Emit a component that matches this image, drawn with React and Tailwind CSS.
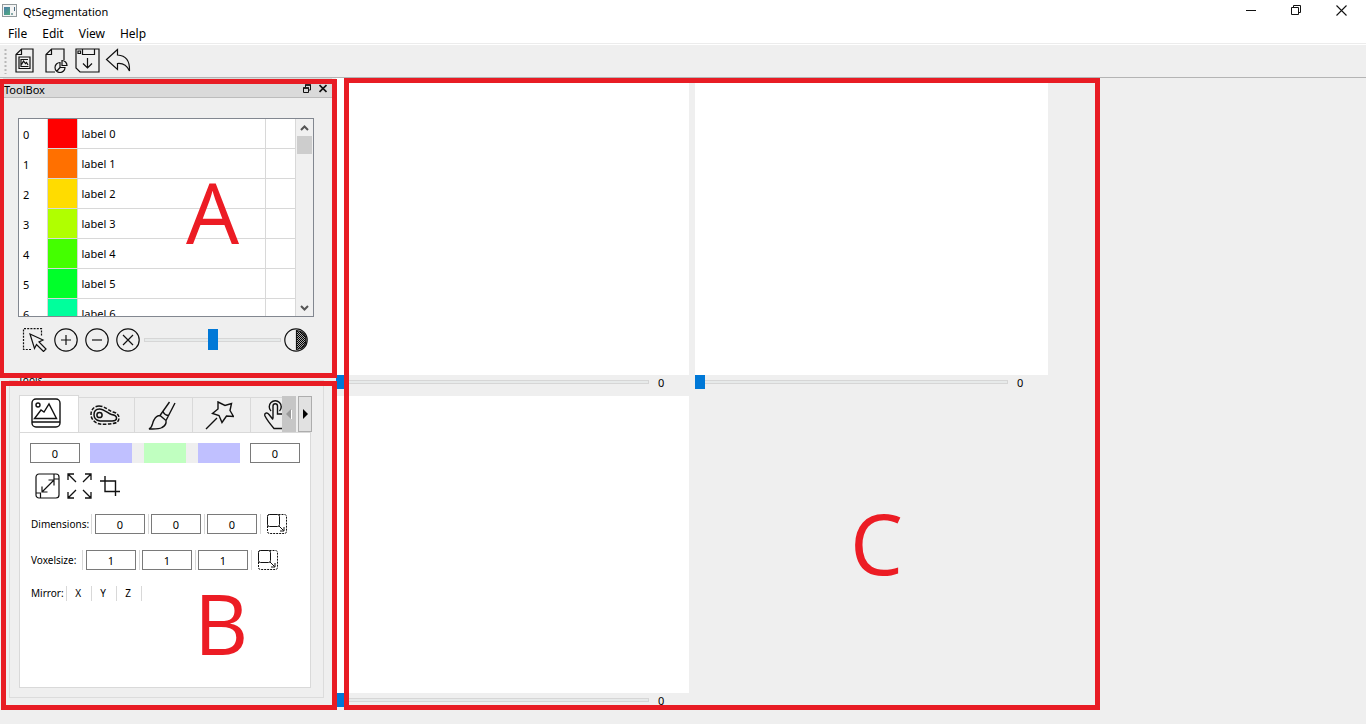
import React from "react";

const labels = [
  { name: "label 0", swatch: "bg-[#ff0000]" },
  { name: "label 1", swatch: "bg-[#ff7000]" },
  { name: "label 2", swatch: "bg-[#ffdc00]" },
  { name: "label 3", swatch: "bg-[#b0ff00]" },
  { name: "label 4", swatch: "bg-[#44ff00]" },
  { name: "label 5", swatch: "bg-[#00ff2a]" },
  { name: "label 6", swatch: "bg-[#00ff9c]" },
];

function Icon({ w, h, children, sw = 1.2 }) {
  return (
    <svg
      width={w}
      height={h}
      viewBox={`0 0 ${w} ${h}`}
      fill="none"
      stroke="#111"
      strokeWidth={sw}
      aria-hidden="true"
      className="block shrink-0"
    >
      {children}
    </svg>
  );
}

function IconButton({ label, children, className = "" }) {
  return (
    <button type="button" aria-label={label} className={`block shrink-0 ${className}`}>
      {children}
    </button>
  );
}

function TitleBar() {
  return (
    <header className="flex h-6 items-center justify-between bg-white pl-[2px] pr-[19px]">
      <div className="flex items-center gap-[6px]">
        <svg width="15" height="13" viewBox="0 0 15 13" aria-hidden="true" className="mb-[3px]">
          <defs>
            <linearGradient id="app" x1="0" y1="0" x2="0.6" y2="1">
              <stop offset="0" stopColor="#4a7ca8" />
              <stop offset="1" stopColor="#4fa585" />
            </linearGradient>
          </defs>
          <rect x="0.5" y="0.5" width="14" height="12" fill="#f4f4f4" stroke="#929a9c" />
          <rect x="2" y="3" width="6" height="8" fill="url(#app)" />
          <rect x="9" y="9" width="2" height="2" fill="#8aa" />
          <rect x="12" y="3" width="1" height="4" fill="#4b6a80" />
        </svg>
        <h1 className="text-[11px]">QtSegmentation</h1>
      </div>
      <div className="flex items-center gap-[35px] pb-1">
        <IconButton label="Minimize">
          <Icon w={10} h={11} sw={1}><path d="M0 5.5h10" /></Icon>
        </IconButton>
        <IconButton label="Restore">
          <Icon w={10} h={10} sw={1}><path d="M.5 2.5h7v7h-7zM2.5 2.5v-2h7v7h-2" /></Icon>
        </IconButton>
        <IconButton label="Close">
          <Icon w={11} h={11} sw={1.1}><path d="M.5.5l10 10M10.500.5l-10 10" /></Icon>
        </IconButton>
      </div>
    </header>
  );
}

function Toolbar() {
  return (
    <div role="toolbar" className="flex h-[33px] items-center gap-2 border-b border-[#b4b4b4] pb-px pl-1">
      <Icon w={3} h={26}><path d="M1.500 1v25" stroke="#b8b8b8" strokeWidth="2" strokeDasharray="2 2" /></Icon>
      <div className="flex gap-[6px]">
        <IconButton label="Open image" className="w-6">
          <Icon w={19} h={25}>
            <path d="M6.500 1H18v23H1V6.500zM6.500 1v5.500H1" />
            <path d="M4 9h11v11.500H4z" />
            <path d="M6 11.500h7M6 18.500h7.500M6 11v8M6.500 16.500l2-3.500 2 2.500 1-1 1.500 2.500" />
          </Icon>
        </IconButton>
        <IconButton label="Open segmentation" className="w-6">
          <Icon w={23} h={25}>
            <path d="M10 24H1V6.500L6.500 1H19v11M6.500 1v5.500H1" />
            <path d="M15 14.500a5 5 0 1 0 5 5h-5zM17 12.500v5h5a5 5 0 0 0-5-5zM15 19.500l-3 3.500" />
          </Icon>
        </IconButton>
        <IconButton label="Save" className="w-6">
          <Icon w={25} h={25}>
            <path d="M1 1h23v23H5l-4-4zM7.500 1v5.500h12V1M3 3h2.500v2.500H3zM12.500 10v10M8 15.500l4.500 4.500 4.500-4.500" />
          </Icon>
        </IconButton>
        <IconButton label="Undo" className="w-6">
          <Icon w={26} h={25}>
            <path d="M12.500 1.500L1.500 11.500l11 10v-6c5-.5 9.500 2 12 7.500C25 13 21 7.500 12.500 7z" />
          </Icon>
        </IconButton>
      </div>
    </div>
  );
}

function Annotation({ letter, className, letterClass }) {
  return (
    <div className={`pointer-events-none absolute z-10 border-5 border-[#e81c24] ${className}`}>
      <span className={`absolute text-[84px] font-medium leading-none text-[#ec1c24] font-['Open_Sans',sans-serif] ${letterClass}`}>
        {letter}
      </span>
    </div>
  );
}

function LabelTable() {
  return (
    <div className="ml-[18px] mr-[22px] flex h-[199px] border border-[#828790] bg-white">
      <div className="min-w-0 flex-1 overflow-hidden">
        <table className="-mt-px w-full table-fixed border-collapse text-left text-[11px]">
          <colgroup>
            <col className="w-[28px]" />
            <col className="w-[30px]" />
            <col />
            <col className="w-[30px]" />
          </colgroup>
          <tbody>
            {labels.map((l, i) => (
              <tr key={l.name} className="h-[30px]">
                <th scope="row" className="pl-1 pt-1 font-normal">{i}</th>
                <td className={`border border-[#d8d8d8] ${l.swatch}`}></td>
                <td className="border border-[#d8d8d8] pl-1 pt-px">{l.name}</td>
                <td className="border border-[#d8d8d8]"></td>
              </tr>
            ))}
          </tbody>
        </table>
      </div>
      <div className="flex w-[17px] flex-col items-center bg-[#f0f0f0] pr-px">
        <button type="button" aria-label="Scroll up" className="flex h-[17px] w-full items-center justify-center">
          <Icon w={9} h={6} sw={2}><path d="M1 5l3.500-3.500L8 5" stroke="#555" /></Icon>
        </button>
        <div className="h-[18px] w-[15px] bg-[#cdcdcd]"></div>
        <button type="button" aria-label="Scroll down" className="mt-auto flex h-[17px] w-full items-center justify-center">
          <Icon w={9} h={6} sw={2}><path d="M1 1l3.500 3.500L8 1" stroke="#555" /></Icon>
        </button>
      </div>
    </div>
  );
}

function ToolBox() {
  return (
    <section className="relative h-[295px]">
      <div className="ml-[3px] mr-1 flex h-5 items-end justify-between border-b border-[#bcbcbc] bg-[#dadada] pl-px pr-[5px]">
        <h2 className="text-[11px] leading-[15px]">ToolBox</h2>
        <div className="flex gap-2 pb-1">
          <IconButton label="Float">
            <Icon w={8} h={9} sw={1}><path d="M.5 4h5v4.500h-5zM2.500 3.500V1h5v5h-2" /><path d="M0 4h6M2 1h6" strokeWidth="1.500" /></Icon>
          </IconButton>
          <IconButton label="Close toolbox">
            <Icon w={8} h={9} sw={1.7}><path d="M.5 1l7 7M7.500 1l-7 7" /></Icon>
          </IconButton>
        </div>
      </div>
      <div className="h-5"></div>
      <LabelTable />
      <div className="flex h-[46px] items-center gap-[7px] pl-[22px]">
        <IconButton label="Select">
          <Icon w={25} h={24}>
            <path d="M9 21.500H1.500V.7h18V8" strokeDasharray="2 1.200" />
            <path d="M8 6l13 6-4 2 7 7-2.500 2.500-7-7-2 4z" />
          </Icon>
        </IconButton>
        <IconButton label="Add label">
          <Icon w={24} h={24}><circle cx="12" cy="12" r="11.200" /><path d="M12 7v10M7 12h10" /></Icon>
        </IconButton>
        <IconButton label="Remove label">
          <Icon w={24} h={24}><circle cx="12" cy="12" r="11.200" /><path d="M7 12h10" /></Icon>
        </IconButton>
        <IconButton label="Clear labels">
          <Icon w={24} h={24}><circle cx="12" cy="12" r="11.200" /><path d="M7 7l10 10M17 7L7 17" /></Icon>
        </IconButton>
        <div className="flex items-center gap-[3px]">
          <input
            type="range"
            aria-label="Opacity"
            defaultValue="50"
            className="-ml-[3px] h-[21px] w-[137px] appearance-none bg-transparent [&::-webkit-slider-runnable-track]:h-1 [&::-webkit-slider-runnable-track]:shadow-[inset_0_0_0_1px_#d6d6d6] [&::-webkit-slider-runnable-track]:bg-[#e7eaea] [&::-webkit-slider-thumb]:-mt-[9px] [&::-webkit-slider-thumb]:h-[21px] [&::-webkit-slider-thumb]:w-[10px] [&::-webkit-slider-thumb]:appearance-none [&::-webkit-slider-thumb]:bg-[#0078d7]"
          />
          <IconButton label="Contrast">
            <Icon w={24} h={24}>
              <defs>
                <pattern id="dots" width="2" height="2" patternUnits="userSpaceOnUse">
                  <rect width="2" height="2" fill="#aaa" stroke="none" />
                  <rect width="1" height="1" fill="#000" stroke="none" />
                  <rect x="1" y="1" width="1" height="1" fill="#000" stroke="none" />
                </pattern>
              </defs>
              <path d="M12.500 2.500a9.500 9.500 0 0 1 0 19z" fill="url(#dots)" />
              <circle cx="12" cy="12" r="11.200" />
            </Icon>
          </IconButton>
        </div>
      </div>
      <Annotation letter="A" className="-bottom-[5px] -left-px -right-px top-px" letterClass="left-[182px] top-[86px]" />
    </section>
  );
}

function NumberBox({ label, value }) {
  return (
    <input
      type="text"
      aria-label={label}
      defaultValue={value}
      className="h-5 w-[50px] shrink-0 border border-[#7a7a7a] bg-white text-center text-[11px] leading-none"
    />
  );
}

function Divider() {
  return <span className="h-5 w-px shrink-0 bg-[#d8d8d8]"></span>;
}

function VectorRow({ title, value, titleWidth }) {
  return (
    <div role="group" aria-label={title} className="flex items-center pl-px">
      <span className={`shrink-0 pt-px text-[10px] ${titleWidth}`}>{title}:</span>
      <div className="flex items-center gap-[3px]">
        <Divider />
        <NumberBox label={`${title} x`} value={value} />
        <span className="flex w-0 justify-center"><Divider /></span>
        <NumberBox label={`${title} y`} value={value} />
        <span className="flex w-0 justify-center"><Divider /></span>
        <NumberBox label={`${title} z`} value={value} />
        <Divider />
      </div>
      <div className="ml-[6px]">
        <IconButton label={`Apply ${title}`}>
          <Icon w={21} h={20} sw={1}>
            <rect x=".5" y=".5" width="19" height="19" rx="2" strokeDasharray="2 1" />
            <rect x=".5" y=".5" width="12" height="12" rx="2" fill="white" />
            <path d="M12 12l4.500 4.500M17 13v4h-4" />
          </Icon>
        </IconButton>
      </div>
    </div>
  );
}

const tabBase = "flex h-[35px] shrink-0 items-center justify-center border-r border-t border-[#d9d9d9] pr-1";

function Tools() {
  return (
    <section className="relative flex flex-1 flex-col">
      <fieldset className="mb-[26px] ml-[9px] mr-[13px] flex flex-1 flex-col border border-[#dcdcdc] pb-[9px] pl-[9px] pr-[10px] pt-2">
        <legend className="-ml-px text-[10px] leading-[14px]">Tools</legend>
        <div role="tablist" className="relative flex h-[37px] items-end overflow-visible">
          <div className="flex w-[263px] items-end overflow-hidden">
            <button type="button" role="tab" aria-selected="true" aria-label="Image" className="z-1 -mb-px flex h-[38px] w-[60px] shrink-0 justify-center border border-b-0 border-[#d9d9d9] bg-white pr-[6px] pt-[2px]">
              <Icon w={30} h={30} sw={1.4}>
                <rect x="1" y="1" width="28" height="28" rx="4" />
                <path d="M1 24h28M3.500 20.500h22L18 6l-5 8-3-2z" />
                <circle cx="7" cy="7" r="2" />
              </Icon>
            </button>
            <button type="button" role="tab" aria-selected="false" aria-label="Region" className={`w-14 ${tabBase}`}>
              <Icon w={30} h={20} sw={1.5}>
                <path d="M9 1C4 1 1 5 1 9.500S4.500 18 10 19c4 .7 9 0 13-.5 4-.5 6-2.500 6-5.500s-2-5-6-6S15 1 9 1z" strokeDasharray="3.500 1.500" />
                <path d="M9.500 4C6 4 4 6.500 4 9.800S6.500 15.500 10 16h12c3 0 4.500-1 4.500-3s-2-3-5-3.500S14 4 9.500 4z" />
                <circle cx="9.500" cy="10" r="2.600" />
              </Icon>
            </button>
            <button type="button" role="tab" aria-selected="false" aria-label="Brush" className={`w-[58px] ${tabBase}`}>
              <Icon w={28} h={29} sw={1.4}>
                <path d="M1 28c4-2 3-6 5-9 1.500-3 4-4.500 6-4.500l6 5c.5 3-1 5.500-4 7-3.500 2-8.500 1.500-13 1.500zM12 14.500L21.500 1M18 19.500L27 2M15 10.500c1 2.500 3 4 6 4" />
              </Icon>
            </button>
            <button type="button" role="tab" aria-selected="false" aria-label="Magic wand" className={`w-[58px] ${tabBase}`}>
              <Icon w={29} h={29} sw={1.4}>
                <path d="M13 1l7 3.500 6.500-2-1.500 7 3.500 6-7-.5-4.500 6.500-3-7-6.500-2L13 8zM1 28l11-11" />
              </Icon>
            </button>
            <button type="button" role="tab" aria-selected="false" aria-label="Touch" className={`w-[58px] ${tabBase}`}>
              <Icon w={29} h={30} sw={1.4}>
                <path d="M10 18.500V6c0-3 4.500-3 4.500 0v8h4c3 0 5 1 5 4v5l-2 5.500H11C8 25 4 20 2 16c-1-3 2-4 4-1.500l4 5" />
                <path d="M8 11a6 6 0 1 1 8.500 0" />
              </Icon>
            </button>
          </div>
          <button type="button" aria-label="Scroll tabs left" className="absolute right-[17px] top-px flex h-9 w-[14px] items-center justify-center bg-[#c6c6c6]">
            <Icon w={6} h={10}><path d="M5 0v10L0 5z" fill="#999" stroke="none" /><path d="M5.500 1v9" stroke="white" strokeWidth="1" /></Icon>
          </button>
          <button type="button" aria-label="Scroll tabs right" className="absolute right-px top-px flex h-9 w-[14px] items-center justify-center border border-[#adadad] bg-[#e1e1e1]">
            <Icon w={5} h={10}><path d="M0 0v10l5-5z" fill="#000" stroke="none" /></Icon>
          </button>
        </div>
        <div role="tabpanel" className="mr-[2px] flex flex-1 flex-col border border-[#d9d9d9] bg-white px-[10px] pt-[10px]">
          <div className="flex items-center gap-[10px]">
            <NumberBox label="Lower threshold" value="0" />
            <div className="flex h-5 w-[150px] justify-between bg-[#efefef]">
              <span className="w-[42px] bg-[#c0c0ff]"></span>
              <span className="w-[42px] bg-[#c0ffc0]"></span>
              <span className="w-[42px] bg-[#c0c0ff]"></span>
            </div>
            <NumberBox label="Upper threshold" value="0" />
          </div>
          <div className="mt-[10px] flex items-center gap-[7px] pl-[5px]">
            <IconButton label="Resize">
              <Icon w={25} h={26}>
                <rect x="1" y="1" width="23" height="24" rx="3" />
                <path d="M1 20h4.500v5M19 1v5h5M7 19L19 7M13.500 7H19v5.500M7 13.500V19h5.500" />
              </Icon>
            </IconButton>
            <IconButton label="Expand">
              <Icon w={25} h={26} sw={1.3}>
                <path d="M9 9L1 1m0 6V1h6M16 9l8-8m-6 0h6v6M9 17l-8 8m0-6v6h6M16 17l8 8m-6 0h6v-6" />
              </Icon>
            </IconButton>
            <IconButton label="Crop">
              <Icon w={22} h={22} sw={1.4}>
                <path d="M6 1v15.500h15M1 6h15.500v15" />
              </Icon>
            </IconButton>
          </div>
          <div className="mt-[15px] flex flex-col gap-4">
            <VectorRow title="Dimensions" value="0" titleWidth="w-[60px]" />
            <VectorRow title="Voxelsize" value="1" titleWidth="w-[51px]" />
          </div>
          <div className="mt-4 flex items-center pl-px text-[10px] leading-[15px]">
            <span className="mr-[2px]">Mirror:</span>
            {["X", "Y", "Z"].map((axis) => (
              <button key={axis} type="button" className="w-[25px] border-l border-[#d8d8d8] pr-px">{axis}</button>
            ))}
            <span className="h-[15px] w-px bg-[#d8d8d8]"></span>
          </div>
        </div>
      </fieldset>
      <Annotation letter="B" className="-right-px bottom-[14px] left-px top-2" letterClass="left-[188px] top-[195px]" />
    </section>
  );
}

function SliceView({ name }) {
  return (
    <div className="flex min-w-0 flex-col">
      <div className="flex-1 bg-white"></div>
      <div className="flex h-[21px] items-start bg-[#efefef]">
        <input
          type="range"
          aria-label={name}
          defaultValue="0"
          className="h-[14px] min-w-0 flex-1 appearance-none bg-transparent [&::-webkit-slider-runnable-track]:h-1 [&::-webkit-slider-runnable-track]:shadow-[inset_0_0_0_1px_#d6d6d6] [&::-webkit-slider-runnable-track]:bg-[#e7eaea] [&::-webkit-slider-thumb]:-mt-[5px] [&::-webkit-slider-thumb]:h-[14px] [&::-webkit-slider-thumb]:w-[10px] [&::-webkit-slider-thumb]:appearance-none [&::-webkit-slider-thumb]:bg-[#0078d7]"
        />
        <output className="w-10 pl-[9px] text-[11px] leading-4">0</output>
      </div>
    </div>
  );
}

export default function App() {
  return (
    <div className="flex min-h-screen flex-col bg-white pr-1 text-black font-['Noto_Sans',sans-serif]">
      <TitleBar />
      <nav className="flex h-5 items-center gap-[15px] border-b border-[#ececec] bg-white pl-2 text-[12px]">
        <a href="#file">File</a>
        <a href="#edit">Edit</a>
        <a href="#view">View</a>
        <a href="#help">Help</a>
      </nav>
      <div className="mt-px flex flex-1 flex-col bg-[#efefef]">
        <Toolbar />
        <main className="flex flex-1">
          <aside className="flex w-[336px] shrink-0 flex-col">
            <ToolBox />
            <Tools />
          </aside>
          <div className="relative grid min-w-0 flex-1 grid-cols-[353fr_353fr_312fr] grid-rows-2 gap-x-[6px] pb-[10px]">
            <SliceView name="Axial slice" />
            <SliceView name="Coronal slice" />
            <div></div>
            <SliceView name="Sagittal slice" />
            <Annotation letter="C" className="bottom-[14px] left-2 right-[266px] top-0" letterClass="left-[501px] top-[418px]" />
          </div>
        </main>
      </div>
    </div>
  );
}
